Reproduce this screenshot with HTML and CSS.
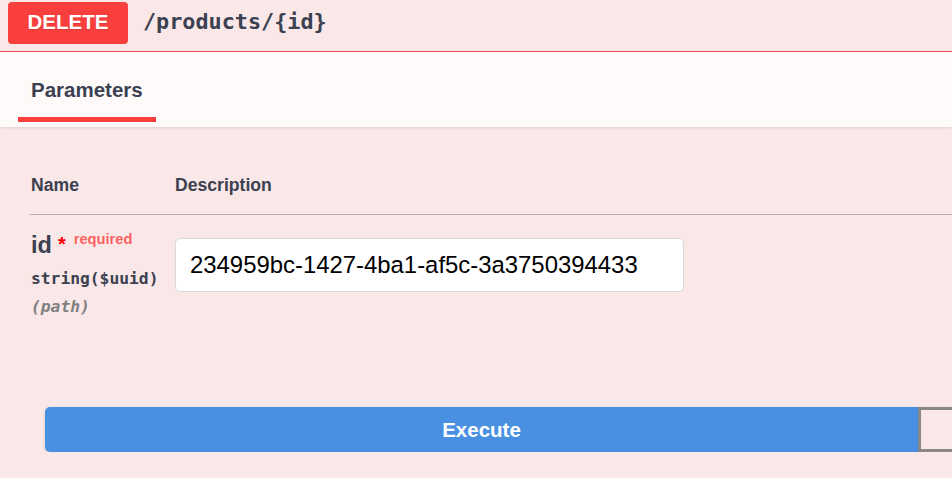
FILE: index.html
```html
<!DOCTYPE html>
<html>
<head>
<meta charset="utf-8">
<link rel="stylesheet" href="styles.css">
</head>
<body>
<div class="opblock">
  <div class="summary">
    <span class="method">DELETE</span>
    <span class="path">/products/{id}</span>
  </div>
  <div class="section-header">
    <div class="tab"><span class="tab-label">Parameters</span></div>
  </div>
  <div class="params">
    <div class="table-head">
      <div class="col-name">Name</div>
      <div class="col-desc">Description</div>
    </div>
    <div class="param-row">
      <div class="col-name">
        <div class="param-name">id<span class="star">*</span><span class="required">required</span></div>
        <div class="param-type">string($uuid)</div>
        <div class="param-in">(path)</div>
      </div>
      <div class="col-desc">
        <div class="input">234959bc-1427-4ba1-af5c-3a3750394433</div>
      </div>
    </div>
  </div>
  <div class="actions">
    <div class="btn-group">
      <div class="btn execute">Execute</div>
      <div class="btn clear"></div>
    </div>
  </div>
</div>
</body>
</html>
```

FILE: styles.css
```css
html, body {
  margin: 0;
  padding: 0;
  height: 100%;
  overflow: hidden;
}
body {
  background: #fae7e7;
  font-family: "Liberation Sans", Arial, sans-serif;
  color: #3b4151;
}
.opblock {
  width: 952px;
  overflow: hidden;
}
.summary {
  height: 51px;
  border-bottom: 1px solid #f04a4a;
  display: flex;
  align-items: flex-start;
  padding-left: 8px;
  box-sizing: content-box;
}
.method {
  margin-top: 2px;
  width: 120px;
  height: 42px;
  background: #f93e3e;
  border-radius: 4px;
  color: #fff;
  font-weight: bold;
  font-size: 20.5px;
  display: flex;
  align-items: center;
  justify-content: center;
  box-sizing: border-box;
  padding-bottom: 2px;
  text-shadow: 0 1px 0 rgba(0,0,0,.1);
}
.path {
  margin-left: 15px;
  margin-top: 9px;
  font-family: "DejaVu Sans Mono", "Liberation Mono", monospace;
  font-weight: bold;
  font-size: 21.8px;
  color: #3b4151;
}
.section-header {
  height: 75px;
  background: rgba(255,255,255,.8);
  box-shadow: 0 1px 3px rgba(0,0,0,.1);
  display: flex;
  align-items: flex-end;
  padding-left: 18px;
}
.tab {
  width: 138px;
  height: 70px;
  box-sizing: border-box;
  padding-left: 13px;
  padding-top: 2px;
  margin-bottom: 5px;
  border-bottom: 5px solid #f93e3e;
  display: flex;
  align-items: flex-start;
}
.tab-label {
  font-weight: bold;
  font-size: 20.5px;
  margin-top: 24px;
  color: #3b4151;
}
.params {
  padding-left: 30px;
  padding-top: 48px;
}
.table-head {
  display: flex;
  height: 39px;
  border-bottom: 1px solid #b3adad;
  font-weight: bold;
  font-size: 17.6px;
  color: #3b4151;
}
.table-head .col-name {
  width: 144px;
  padding-left: 1px;
}
.param-row {
  display: flex;
  padding-top: 17px;
}
.param-row .col-name {
  width: 144px;
  padding-left: 1px;
}
.param-name {
  font-weight: bold;
  font-size: 23.5px;
  color: #3b4151;
  display: flex;
  align-items: flex-start;
}
.star {
  color: red;
  font-size: 20px;
  margin-left: 6px;
  position: relative;
  top: 1px;
}
.required {
  color: rgba(255,0,0,.6);
  font-size: 14.7px;
  margin-left: 8px;
  position: relative;
  top: -1px;
}
.param-type {
  margin-top: 10px;
  font-family: "DejaVu Sans Mono", "Liberation Mono", monospace;
  font-weight: bold;
  font-size: 16.3px;
  color: #3b4151;
}
.param-in {
  margin-top: 9px;
  font-family: "DejaVu Sans Mono", "Liberation Mono", monospace;
  font-weight: bold;
  font-style: italic;
  font-size: 16.3px;
  color: #808080;
}
.param-row .col-desc {
  padding-top: 6px;
}
.input {
  width: 509px;
  height: 54px;
  box-sizing: border-box;
  background: #fff;
  border: 1px solid #d9d9d9;
  border-radius: 5px;
  font-size: 23.9px;
  color: #000;
  padding-left: 14px;
  display: flex;
  align-items: center;
}
.actions {
  padding-left: 45px;
  padding-top: 91px;
}
.btn-group {
  display: flex;
  width: 1800px;
}
.btn {
  height: 45px;
  box-sizing: border-box;
  font-weight: bold;
  font-size: 20.5px;
  display: flex;
  align-items: center;
  justify-content: center;
}
.execute {
  width: 873px;
  background: #4990e2;
  color: #fff;
  border-radius: 5px 0 0 5px;
  box-shadow: 0 1px 3px rgba(0,0,0,.15);
}
.clear {
  width: 400px;
  border: 3px solid #888;
  border-radius: 0 5px 5px 0;
  box-shadow: 0 1px 3px rgba(0,0,0,.1);
}
```
